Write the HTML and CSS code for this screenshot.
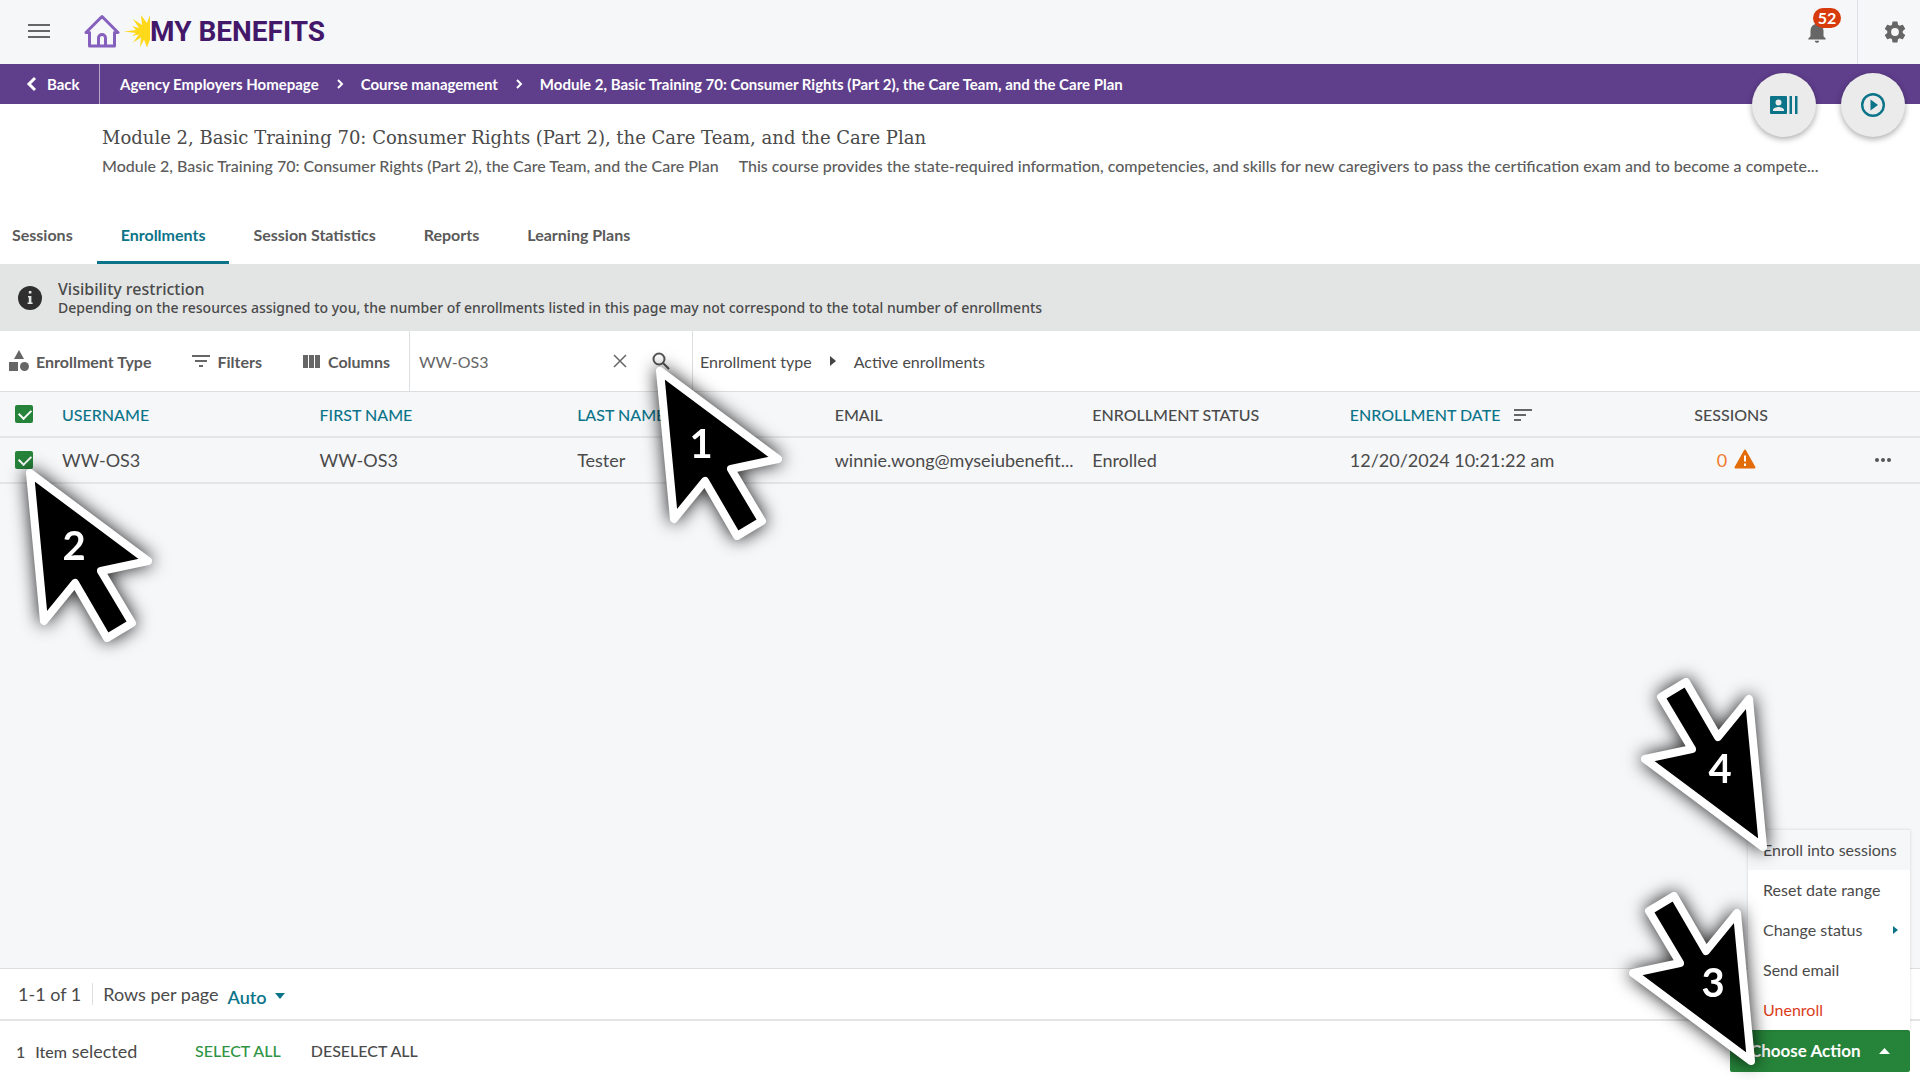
FILE: index.html
```html
<!DOCTYPE html>
<html lang="en">
<head>
  <meta charset="UTF-8">
  <title>Enrollments - My Benefits</title>
  <meta name="viewport" content="width=device-width, initial-scale=1.0">
  <link rel="stylesheet" href="styles.css">
</head>
<body>

  <header class="topbar">
    <button class="icon-btn menu-btn" aria-label="Menu">
      <svg width="22" height="16" viewBox="0 0 22 16"><path d="M0 2h22M0 8h22M0 14h22" stroke="#666" stroke-width="2"/></svg>
    </button>
    <a href="#" class="logo">
      <svg width="36" height="34" viewBox="0 0 36 34" fill="none" stroke="#8560bd" stroke-width="3" stroke-linejoin="round" stroke-linecap="round"><path d="M2 18.500L18 2.500l16 16h-3.500V32h-25V18.500zM14.500 32V24a3.500 3.500 0 0 1 7 0v8"/></svg>
      <svg class="sun" width="26" height="34" viewBox="0 0 26 34"><path fill="#fdd91a" d="M26 1l-3 8-6-8 1 10-9-6 6 9-7-2 4 4-12 1.500 12 1.500-4 3 7-1.500-6 8 8-5-1 10 4-8 3 8 3-8z"/></svg>
      <span class="logo-text">MY BENEFITS</span>
    </a>
    <div class="topbar-right">
      <button class="icon-btn bell-btn" aria-label="Notifications">
        <svg width="26" height="26" viewBox="0 0 24 24" fill="#666"><path d="M12 22c1.100 0 2-.9 2-2h-4c0 1.100.9 2 2 2zm6-6v-5c0-3.070-1.640-5.640-4.500-6.320V4a1.500 1.500 0 0 0-3 0v.68C7.630 5.360 6 7.920 6 11v5l-2 2v1h16v-1l-2-2z"/></svg>
        <span class="badge">52</span>
      </button>
      <button class="icon-btn gear-btn" aria-label="Settings">
        <svg width="26" height="26" viewBox="0 0 24 24" fill="#666"><path d="M19.140 12.940c.04-.3.060-.61.060-.94 0-.32-.02-.64-.07-.94l2.030-1.580a.49.49 0 0 0 .12-.61l-1.920-3.320a.49.49 0 0 0-.59-.22l-2.390.96a7 7 0 0 0-1.620-.94l-.36-2.540a.48.48 0 0 0-.48-.41h-3.840c-.24 0-.43.17-.47.41l-.36 2.540c-.59.24-1.130.57-1.620.94l-2.390-.96a.48.48 0 0 0-.59.22L2.740 8.870c-.12.21-.08.47.12.61l2.030 1.580c-.05.3-.09.63-.09.94s.02.64.07.94l-2.030 1.580a.49.49 0 0 0-.12.61l1.920 3.320c.12.22.37.29.59.22l2.390-.96c.5.38 1.030.7 1.620.94l.36 2.540c.05.24.24.41.48.41h3.840c.24 0 .44-.17.47-.41l.36-2.540c.59-.24 1.130-.56 1.620-.94l2.390.96c.22.08.47 0 .59-.22l1.920-3.320a.49.49 0 0 0-.12-.61zM12 15.600a3.600 3.600 0 1 1 0-7.200 3.600 3.600 0 0 1 0 7.200z"/></svg>
      </button>
    </div>
  </header>

  <nav class="breadcrumb" aria-label="Breadcrumb">
    <a href="#" class="back">
      <svg width="11" height="16" viewBox="0 0 11 16"><path d="M9 2L3 8l6 6" fill="none" stroke="#fff" stroke-width="3"/></svg>
      Back
    </a>
    <a href="#">Agency Employers Homepage</a>
    <svg class="sep" width="8" height="10" viewBox="0 0 8 10"><path d="M2 1l4 4-4 4" fill="none" stroke="#fff" stroke-width="2"/></svg>
    <a href="#">Course management</a>
    <svg class="sep" width="8" height="10" viewBox="0 0 8 10"><path d="M2 1l4 4-4 4" fill="none" stroke="#fff" stroke-width="2"/></svg>
    <a href="#">Module 2, Basic Training 70: Consumer Rights (Part 2), the Care Team, and the Care Plan</a>

    <div class="round-actions">
      <button class="round-btn" aria-label="Course users">
        <svg width="28" height="18" viewBox="0 0 28 18" fill="#0c7489"><path fill-rule="evenodd" d="M1 0h15a1 1 0 0 1 1 1v16a1 1 0 0 1-1 1H1a1 1 0 0 1-1-1V1a1 1 0 0 1 1-1zm7.500 3.500a3 3 0 1 0 0 6 3 3 0 0 0 0-6zM3 15h11v-1c0-2-3.500-3-5.500-3S3 12 3 14z"/><path d="M19.500 0H22v18h-2.500zM25 0h2.500v18H25z"/></svg>
      </button>
      <button class="round-btn" aria-label="Play course">
        <svg width="24" height="24" viewBox="0 0 24 24"><circle cx="12" cy="12" r="10.800" fill="none" stroke="#0c7489" stroke-width="2.400"/><path d="M9.500 6.500v11l7.500-5.500z" fill="#0c7489"/></svg>
      </button>
    </div>
  </nav>

  <section class="course">
    <h1>Module 2, Basic Training 70: Consumer Rights (Part 2), the Care Team, and the Care Plan</h1>
    <p><span>Module 2, Basic Training 70: Consumer Rights (Part 2), the Care Team, and the Care Plan</span>This course provides the state-required information, competencies, and skills for new caregivers to pass the certification exam and to become a compete...</p>
  </section>

  <nav class="tabs" aria-label="Course sections">
    <a href="#">Sessions</a>
    <a href="#" class="active">Enrollments</a>
    <a href="#">Session Statistics</a>
    <a href="#">Reports</a>
    <a href="#">Learning Plans</a>
  </nav>

  <div class="notice">
    <svg width="24" height="24" viewBox="0 0 24 24"><circle cx="12" cy="12" r="12" fill="#2f2f2f"/><path d="M10.800 5h2.600v2.600h-2.600zM10 10h3.400v6.500h1.200V18H9.600v-1.500h1.200v-5H10z" fill="#e3e5e5"/></svg>
    <div>
      <h2>Visibility restriction</h2>
      <p>Depending on the resources assigned to you, the number of enrollments listed in this page may not correspond to the total number of enrollments</p>
    </div>
  </div>

  <div class="toolbar">
    <div class="tools">
      <button>
        <svg width="20" height="22" viewBox="0 0 20 22" fill="#666"><path d="M10 0l5 9H5zM0 12h9v9H0z"/><circle cx="15.500" cy="16.500" r="4.500"/></svg>
        Enrollment Type
      </button>
      <button>
        <svg width="18" height="12" viewBox="0 0 18 12"><path d="M0 1h18M3 6h12M7 11h4" stroke="#666" stroke-width="2"/></svg>
        Filters
      </button>
      <button>
        <svg width="18" height="13" viewBox="0 0 18 13" fill="#666"><path d="M0 0h5v13H0zM6 0h5v13H6zM12 0h5v13h-5z"/></svg>
        Columns
      </button>
    </div>
    <form class="search">
      <input type="text" value="WW-OS3" aria-label="Search enrollments">
      <button type="button" aria-label="Clear">
        <svg width="14" height="14" viewBox="0 0 14 14"><path d="M1 1l12 12M13 1L1 13" stroke="#666" stroke-width="1.500"/></svg>
      </button>
      <button type="button" aria-label="Search">
        <svg width="18" height="18" viewBox="0 0 18 18" fill="none" stroke="#555" stroke-width="2"><circle cx="7" cy="7" r="5.500"/><path d="M11 11l6 6"/></svg>
      </button>
    </form>
    <div class="filter-path">
      <span>Enrollment type</span>
      <svg width="6" height="10" viewBox="0 0 6 10"><path d="M0 0l6 5-6 5z" fill="#444"/></svg>
      <span>Active enrollments</span>
    </div>
  </div>

  <main class="grid-area">
    <table>
      <colgroup>
        <col class="col-check">
        <col span="7">
        <col class="col-more">
      </colgroup>
      <thead>
        <tr>
          <th class="check"><input type="checkbox" checked aria-label="Select all rows"></th>
          <th class="sortable">USERNAME</th>
          <th class="sortable">FIRST NAME</th>
          <th class="sortable">LAST NAME</th>
          <th>EMAIL</th>
          <th>ENROLLMENT STATUS</th>
          <th class="sortable">ENROLLMENT DATE
            <svg width="18" height="12" viewBox="0 0 18 12"><path d="M0 1h18M0 6h12M0 11h7" stroke="#666" stroke-width="2"/></svg>
          </th>
          <th class="center">SESSIONS</th>
          <th></th>
        </tr>
      </thead>
      <tbody>
        <tr>
          <td class="check"><input type="checkbox" checked aria-label="Select WW-OS3"></td>
          <td>WW-OS3</td>
          <td>WW-OS3</td>
          <td>Tester</td>
          <td>winnie.wong@myseiubenefit...</td>
          <td>Enrolled</td>
          <td>12/20/2024 10:21:22 am</td>
          <td class="center warn">0
            <svg width="22" height="20" viewBox="0 0 22 20"><path d="M11 1.500L20.500 18.500H1.500z" fill="#e36c0a" stroke="#e36c0a" stroke-width="2" stroke-linejoin="round"/><path d="M11 6.500v6M11 14.500v2.500" stroke="#fff" stroke-width="2"/></svg>
          </td>
          <td class="more"><button class="icon-btn" aria-label="More">
            <svg width="18" height="6" viewBox="0 0 18 6" fill="#555"><circle cx="3" cy="3" r="2"/><circle cx="9" cy="3" r="2"/><circle cx="15" cy="3" r="2"/></svg>
          </button></td>
        </tr>
      </tbody>
    </table>
  </main>

  <div class="pager">
    <span class="count">1-1 of 1</span>
    <span>Rows per page</span>
    <button class="auto">Auto
      <svg width="10" height="6" viewBox="0 0 10 6"><path d="M0 0h10L5 6z" fill="#0c7489"/></svg>
    </button>
  </div>

  <footer class="selection">
    <span class="selected"><b>1</b><b>Item</b> selected</span>
    <button class="select-all">SELECT ALL</button>
    <button class="deselect-all">DESELECT ALL</button>
    <div class="choose">
      <div class="choose-menu">
        <button class="hover">Enroll into sessions</button>
        <button>Reset date range</button>
        <button>Change status
          <svg width="5" height="8" viewBox="0 0 5 8"><path d="M0 0l5 4-5 4z" fill="#0c7489"/></svg>
        </button>
        <button>Send email</button>
        <button class="danger">Unenroll</button>
      </div>
      <button class="choose-btn">Choose Action
        <svg width="11" height="6" viewBox="0 0 11 6"><path d="M0 6h11L5.500 0z" fill="#fff"/></svg>
      </button>
    </div>
  </footer>

  <!-- numbered step pointers -->
  <svg class="pointer step-1" viewBox="0 0 160 210"><path d="M20 20l118 88-47 10 31 52-25 15-32-55-31 38z"/><text x="61" y="107">1</text></svg>
  <svg class="pointer step-2" viewBox="0 0 160 210"><path d="M20 20l118 88-47 10 31 52-25 15-32-55-31 38z"/><text x="64" y="107">2</text></svg>
  <svg class="pointer step-3" viewBox="0 0 160 210"><path d="M140 190L22 102l47-10-31-52 25-15 32 55 31-38z"/><text x="102" y="126">3</text></svg>
  <svg class="pointer step-4" viewBox="0 0 160 210"><path d="M140 190L22 102l47-10-31-52 25-15 32 55 31-38z"/><text x="97" y="126">4</text></svg>

</body>
</html>
```
FILE: styles.css
```css
* {
  box-sizing: border-box;
  margin: 0;
  padding: 0;
}

body {
  font-family: Lato, "Liberation Sans", sans-serif;
  font-size: 16px;
  color: #4a4a4a;
  background-color: #fff;
  min-height: 100vh;
  display: flex;
  flex-direction: column;
  position: relative;
}

button {
  font: inherit;
  color: inherit;
  background: none;
  border: none;
  cursor: pointer;
}

a {
  color: inherit;
  text-decoration: none;
}

svg {
  flex: none;
}

.icon-btn {
  display: flex;
  align-items: center;
  justify-content: center;
}

/* top bar */
.topbar {
  display: flex;
  align-items: center;
  height: 64px;
  background: #f6f7f9;
  padding: 0 0 2px 28px;
}

.logo {
  display: flex;
  align-items: center;
  margin-left: 34px;
}

.sun {
  margin-left: 4px;
}

.logo-text {
  font-family: Roboto, "Liberation Sans", sans-serif;
  font-weight: bold;
  font-size: 28px;
  color: #431769;
  white-space: nowrap;
}

.topbar-right {
  display: flex;
  margin-left: auto;
  height: 64px;
  margin-bottom: -2px;
}

.bell-btn {
  position: relative;
  width: 80px;
}

.badge {
  position: absolute;
  top: 8px;
  left: 36px;
  width: 28px;
  height: 20px;
  border-radius: 10px;
  background: #d83b0b;
  color: #fff;
  font-size: 16px;
  font-weight: bold;
  line-height: 20px;
}

.gear-btn {
  width: 63px;
  padding-left: 12px;
  border-left: 1px solid #dcdfe1;
}

/* breadcrumb */
.breadcrumb {
  position: relative;
  display: flex;
  align-items: center;
  height: 40px;
  background: #5f3e8c;
  color: #fff;
  font-size: 15px;
  font-weight: bold;
}

.back {
  display: flex;
  align-items: center;
  gap: 10px;
  width: 100px;
  height: 100%;
  padding-left: 26px;
  margin-right: 20px;
  border-right: 1px solid #b7a6cc;
}

.sep {
  margin: 0 17px;
}

.round-actions {
  position: absolute;
  top: 9px;
  right: 15px;
  display: flex;
  gap: 25px;
}

.round-btn {
  display: flex;
  align-items: center;
  justify-content: center;
  width: 64px;
  height: 64px;
  border-radius: 50%;
  background: #ebebeb;
  box-shadow: 0 2px 6px rgba(0,0,0,0.35);
}

/* course heading */
.course {
  padding: 20px 64px 0 102px;
  height: 106px;
}

.course h1 {
  font-family: "DejaVu Serif", serif;
  font-size: 18px;
  font-weight: normal;
  line-height: 28px;
}

.course p {
  line-height: 28px;
  font-weight: 500;
  color: #5c5c5c;
  white-space: nowrap;
  overflow: hidden;
}

.course p span {
  margin-right: 20px;
}

/* tabs */
.tabs {
  display: flex;
  height: 54px;
  font-weight: bold;
  color: #5a5a5a;
}

.tabs a {
  padding: 13px 24px 0;
  line-height: 24px;
}

.tabs a:first-child {
  padding-left: 12px;
}

.tabs .active {
  color: #0c7489;
  border-bottom: 3px solid #0c7489;
}

/* notice */
.notice {
  display: flex;
  align-items: center;
  gap: 16px;
  height: 67px;
  padding-left: 18px;
  background: #e3e5e5;
  font-family: "Noto Sans", sans-serif;
}

.notice h2 {
  font-size: 16px;
  font-weight: 500;
  line-height: 20px;
}

.notice p {
  font-size: 14px;
  font-weight: 500;
  line-height: 18px;
}

/* toolbar */
.toolbar {
  display: flex;
  height: 60px;
}

.tools {
  display: flex;
  align-items: center;
  gap: 41px;
  width: 409px;
  padding-left: 9px;
  font-weight: bold;
  color: #5a5a5a;
}

.tools button {
  display: flex;
  align-items: center;
  gap: 7px;
}

.search {
  display: flex;
  align-items: center;
  width: 284px;
  border-left: 1px solid #dcdfe1;
  border-right: 1px solid #dcdfe1;
}

.search input {
  width: 203px;
  padding-left: 9px;
  border: none;
  outline: none;
  font: inherit;
  color: #666;
}

.search button {
  display: flex;
  margin-right: 25px;
}

.filter-path {
  display: flex;
  align-items: center;
  gap: 18px;
  padding-left: 7px;
}

/* table */
.grid-area {
  flex: 1;
  background: #f6f7f9;
  border-top: 1px solid #dcdfe1;
}

table {
  width: 100%;
  table-layout: fixed;
  border-collapse: collapse;
}

.col-check {
  width: 62px;
}

.col-more {
  width: 55px;
}

th,
td {
  height: 46px;
  padding-right: 10px;
  text-align: left;
  white-space: nowrap;
  border-bottom: 2px solid #e3e5e7;
}

th {
  height: 45px;
  font-size: 16px;
  font-weight: 500;
}

td {
  font-size: 18px;
}

th svg {
  margin-left: 10px;
}

.sortable {
  color: #0c7489;
}

.center {
  text-align: center;
}

.warn {
  padding-right: 0;
  color: #f07a2a;
}

.warn svg {
  margin-left: 2px;
  vertical-align: -2px;
}

.check {
  padding: 0 0 0 15px;
}

.check input {
  appearance: none;
  display: block;
  width: 18px;
  height: 18px;
  border-radius: 2px;
  background: #26843a;
}

.check input::before {
  content: "";
  display: block;
  width: 6px;
  height: 10px;
  margin: 2px 0 0 6px;
  border: solid #fff;
  border-width: 0 2px 2px 0;
  transform: rotate(45deg);
}

.more {
  padding-left: 9px;
}

/* pager and selection bar */
.pager {
  display: flex;
  align-items: center;
  height: 53px;
  padding-left: 18px;
  font-size: 18px;
  border-top: 1px solid #dcdfe1;
  border-bottom: 2px solid #e3e5e7;
}

.count {
  padding-right: 11px;
  margin-right: 10px;
  border-right: 1px solid #dcdfe1;
}

.auto {
  padding: 6px 0 0 9px;
  font-weight: 600;
  color: #0c7489;
}

.auto svg {
  margin-left: 4px;
  vertical-align: 5px;
}

.selection {
  display: flex;
  align-items: center;
  height: 59px;
  padding: 0 10px 0 16px;
}

.selected {
  width: 179px;
  font-size: 18px;
}

.selected b {
  margin-right: 10px;
  font-size: 16px;
  font-weight: 500;
}

.selected b + b {
  margin-right: 0;
}

.select-all {
  margin-right: 30px;
  font-weight: 500;
  color: #2e9443;
}

.deselect-all {
  font-weight: 500;
}

.choose {
  position: relative;
  margin-left: auto;
}

.choose-btn {
  display: flex;
  align-items: center;
  gap: 18px;
  width: 180px;
  height: 42px;
  padding-left: 20px;
  border-radius: 2px;
  background: #26843a;
  color: #fff;
  font-size: 17px;
  font-weight: bold;
}

.choose-menu {
  position: absolute;
  right: 0;
  bottom: 42px;
  width: 162px;
  background: #fff;
  box-shadow: 0 0 3px rgba(0,0,0,0.15);
}

.choose-menu button {
  display: flex;
  align-items: center;
  justify-content: space-between;
  width: 100%;
  padding: 10px 12px 10px 15px;
  line-height: 20px;
  white-space: nowrap;
}

.choose-menu .hover {
  background: #f6f7f9;
}

.choose-menu .danger {
  color: #dc3c1c;
}

/* step pointers */
.pointer {
  position: absolute;
  width: 160px;
  height: 210px;
  overflow: visible;
  filter: drop-shadow(0 0 9px rgba(0,0,0,0.9));
  pointer-events: none;
}

.pointer path {
  fill: #000;
  stroke: #fff;
  stroke-width: 8px;
  stroke-linejoin: round;
}

.pointer text {
  fill: #fff;
  font-size: 40px;
  font-weight: bold;
  text-anchor: middle;
}

.step-1 {
  left: 640px;
  top: 351px;
}

.step-2 {
  left: 10px;
  top: 453px;
}

.step-3 {
  right: 149px;
  bottom: -1px;
}

.step-4 {
  right: 137px;
  bottom: 213px;
}
```
